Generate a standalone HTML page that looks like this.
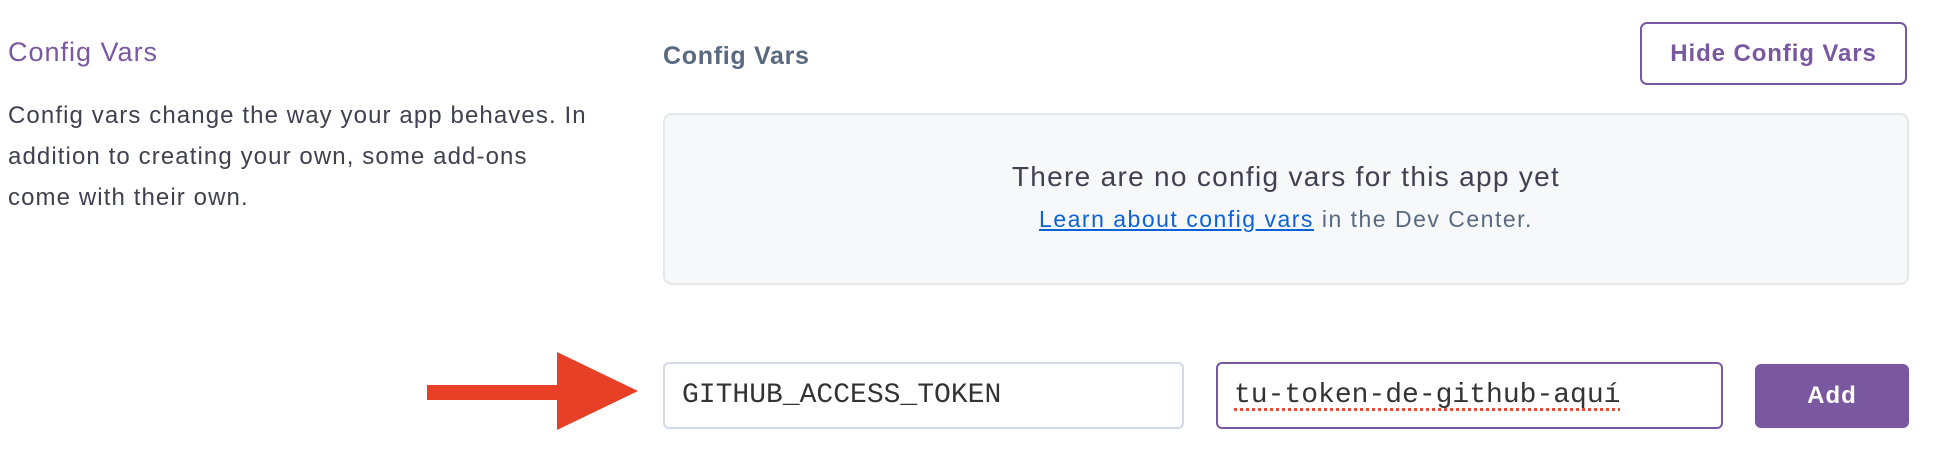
<!DOCTYPE html>
<html><head><meta charset="utf-8"><style>
body{margin:0;width:1940px;height:470px;background:#fff;position:relative;font-family:"Liberation Sans",sans-serif;overflow:hidden}
.a{position:absolute}
</style></head><body>
<div class="a" style="left:8px;top:37px;font-size:27px;letter-spacing:1px;color:#79589f">Config Vars</div>
<div class="a" style="left:8px;top:95px;width:592px;font-size:24px;letter-spacing:1.1px;line-height:41px;color:#3f4150">Config vars change the way your app behaves. In<br>addition to creating your own, some add-ons<br>come with their own.</div>
<div class="a" style="left:663px;top:42px;font-size:25px;letter-spacing:0.7px;font-weight:bold;color:#596981">Config Vars</div>
<div class="a" style="left:1640px;top:22px;width:267px;height:63px;border:2px solid #79589f;border-radius:7px;box-sizing:border-box;color:#79589f;font-weight:bold;font-size:24px;letter-spacing:0.9px;text-align:center;line-height:59px">Hide Config Vars</div>
<div class="a" style="left:663px;top:113px;width:1246px;height:172px;box-sizing:border-box;background:#f7f8fa;border:2px solid #e5e7eb;border-radius:9px;text-align:center;color:#3f4150">
<div style="margin-top:46px;font-size:28px;letter-spacing:1.3px">There are no config vars for this app yet</div>
<div style="margin-top:13px;font-size:23px;letter-spacing:1.5px;color:#596981"><span style="color:#0b62d6;text-decoration:underline">Learn about config vars</span> in the Dev Center.</div>
</div>
<div class="a" style="left:427px;top:385px;width:134px;height:15px;background:#e84027"></div>
<svg class="a" style="left:557px;top:352px" width="82" height="78"><polygon points="0,0 81,39 0,78" fill="#e84027"/></svg>
<div class="a" style="left:663px;top:362px;width:521px;height:67px;box-sizing:border-box;border:2px solid #d3dae6;border-radius:6px;font-family:'Liberation Mono',monospace;font-size:28px;line-height:63px;padding-left:17px;color:#333">GITHUB_ACCESS_TOKEN</div>
<div class="a" style="left:1216px;top:362px;width:507px;height:67px;box-sizing:border-box;border:2px solid #79589f;border-radius:6px;font-family:'Liberation Mono',monospace;font-size:28px;line-height:63px;padding-left:16px;color:#333"><span style="text-decoration:underline dotted #e84027;text-underline-offset:6px">tu-token-de-github-aquí</span></div>
<div class="a" style="left:1755px;top:364px;width:154px;height:64px;background:#79589f;border-radius:6px;color:#fff;font-weight:bold;font-size:24px;letter-spacing:1px;text-align:center;line-height:64px">Add</div>
</body></html>
